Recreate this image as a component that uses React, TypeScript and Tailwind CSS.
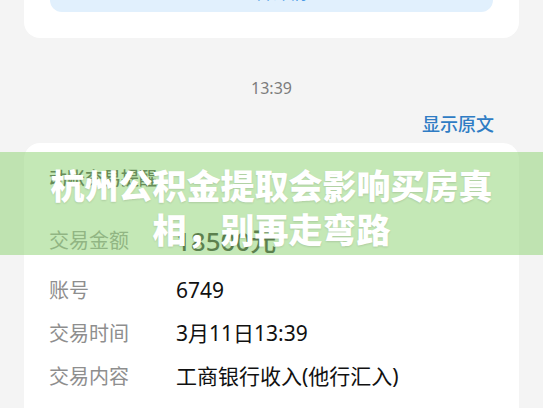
const cjk = "font-['Noto_Sans','Noto_Sans_CJK_SC',sans-serif]";

type Row = { label: string; value: string; h: string; big?: boolean };

const rows: Row[] = [
  { label: "交易金额", value: "18500元", h: "h-[56px]", big: true },
  { label: "账号", value: "6749", h: "h-[43px]" },
  { label: "交易时间", value: "3月11日13:39", h: "h-[43px]" },
  { label: "交易内容", value: "工商银行收入(他行汇入)", h: "h-[43px]" },
  { label: "账户余额", value: "24743.22元", h: "h-[43px]" },
];

export default function App() {
  return (
    <div className={`relative h-[408px] w-full overflow-hidden bg-[#f4f4f4] ${cjk}`}>
      {/* previous message card, scrolled mostly out of view */}
      <div className="mx-6 -mt-[50px] rounded-b-[16px] bg-white px-[26px] pb-[26px]">
        <div className="flex h-[62px] items-end justify-center rounded-b-[12px] bg-[#e1f0fd] pb-[10px]">
          <span className="text-[18px] leading-[20px] text-[#4a9be6]">查看详情</span>
        </div>
      </div>

      <div className="mt-[38px] text-center text-[16px] leading-[24px] text-[#7c7c7c]">13:39</div>

      <div className="mt-[12px] flex justify-end pr-[49px]">
        <span className="text-[18px] font-medium leading-[24px] text-[#2f7cc4]">显示原文</span>
      </div>

      <div className="mx-6 mt-[7px] rounded-t-[16px] bg-white pl-[25px]">
        <div className="flex h-[70px] items-center">
          <span className="text-[18px] font-medium text-[#333]">动账交易提醒</span>
        </div>
        {rows.map((r) => (
          <div key={r.label} className={`flex items-center ${r.h}`}>
            <span className="w-[127px] shrink-0 text-[20px] text-[#8e8e8e]">{r.label}</span>
            <span
              className={
                r.big
                  ? "text-[26px] font-medium text-[#1a1a1a]"
                  : "text-[21px] text-[#111]"
              }
            >
              {r.value}
            </span>
          </div>
        ))}
      </div>

      {/* article title overlay */}
      <div className="absolute left-0 right-0 top-[152px] h-[103px] bg-[rgba(148,213,122,0.55)] px-[48px] pt-[12px]">
        <h1 className="text-center text-[34px] font-extrabold leading-[44px] text-white [text-shadow:0_1px_2px_rgba(0,0,0,0.12)]">
          杭州公积金提取会影响买房真相，别再走弯路
        </h1>
      </div>
    </div>
  );
}
